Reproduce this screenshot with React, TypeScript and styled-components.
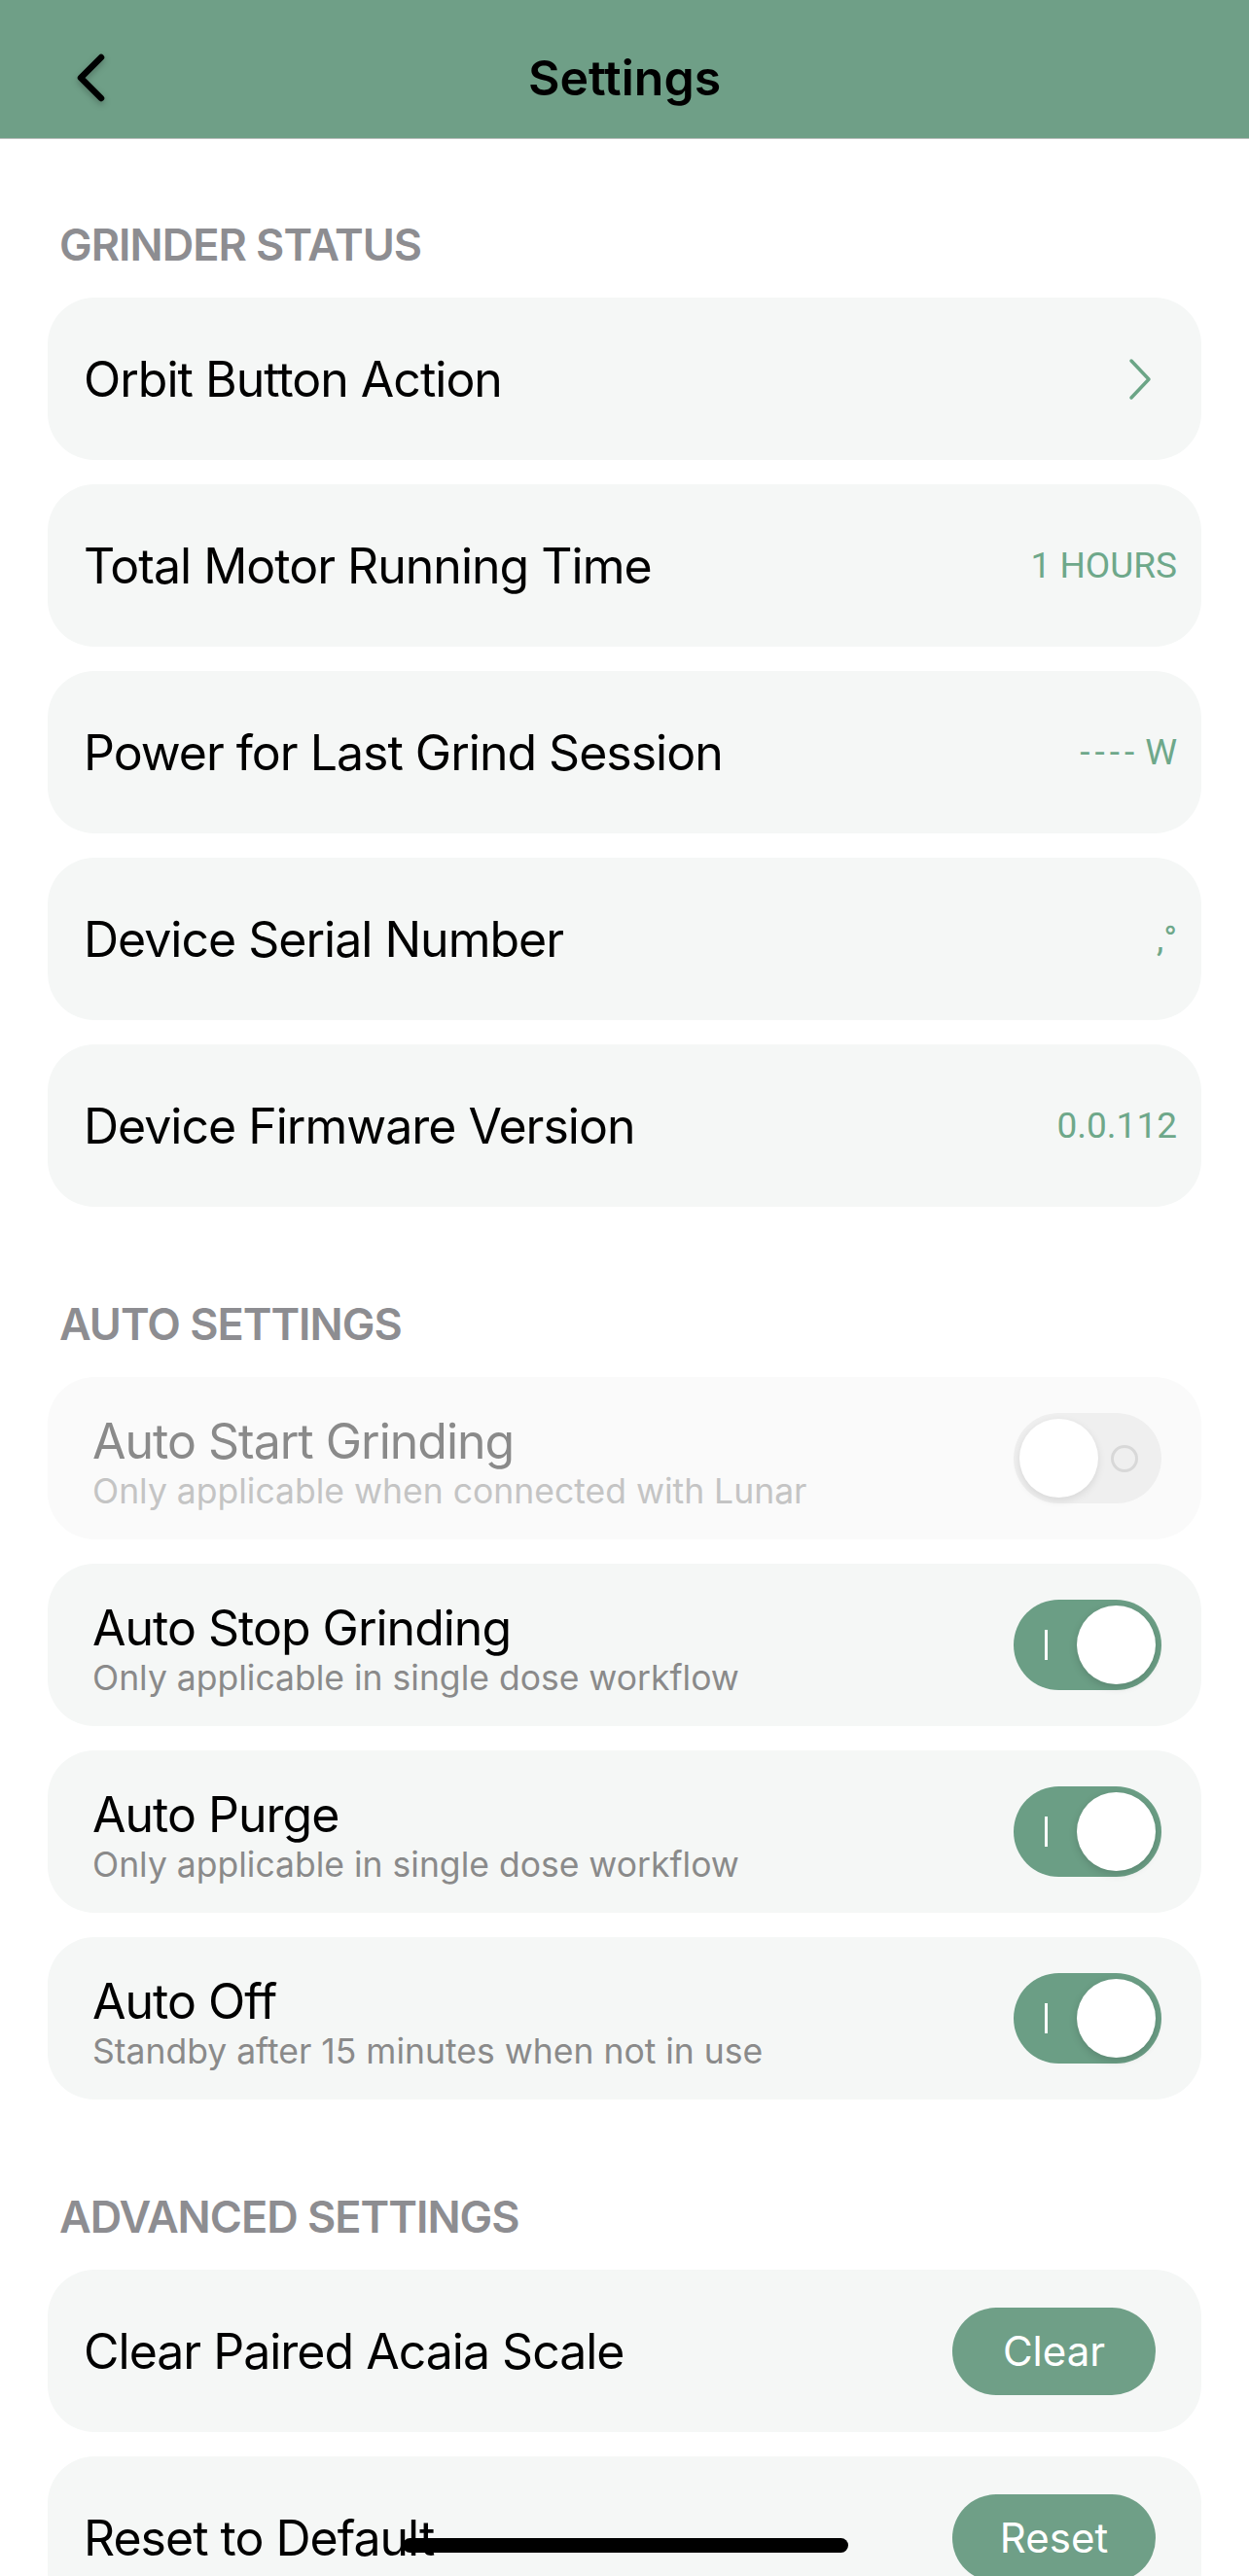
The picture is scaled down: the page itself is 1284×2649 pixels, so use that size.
import styled, { createGlobalStyle } from 'styled-components'

const GREEN = '#6f9f87'

const GlobalStyle = createGlobalStyle`
  html, body {
    margin: 0;
    padding: 0;
    background: #ffffff;
    overflow: hidden;
  }
  body {
    font-family: Inter, "Noto Sans", "Liberation Sans", sans-serif;
    color: #000;
  }
`

type StatusItem = { label: string; value?: string; link?: boolean; dashed?: boolean }
type AutoItem = { label: string; hint: string; on: boolean; disabled?: boolean }

const statusItems: StatusItem[] = [
  { label: 'Orbit Button Action', link: true },
  { label: 'Total Motor Running Time', value: '1 HOURS' },
  { label: 'Power for Last Grind Session', value: 'W', dashed: true },
  { label: 'Device Serial Number', value: ',°' },
  { label: 'Device Firmware Version', value: '0.0.112' },
]

const autoItems: AutoItem[] = [
  { label: 'Auto Start Grinding', hint: 'Only applicable when connected with Lunar', on: false, disabled: true },
  { label: 'Auto Stop Grinding', hint: 'Only applicable in single dose workflow', on: true },
  { label: 'Auto Purge', hint: 'Only applicable in single dose workflow', on: true },
  { label: 'Auto Off', hint: 'Standby after 15 minutes when not in use', on: true },
]

const advancedItems = [
  { label: 'Clear Paired Acaia Scale', action: 'Clear' },
  { label: 'Reset to Default', action: 'Reset' },
]

const BackIcon = () => (
  <BackSvg width="30" height="50" viewBox="0 0 30 50">
    <path d="M26 4 L5 25 L26 46" fill="none" stroke="#000" strokeWidth="6.5" strokeLinecap="round" strokeLinejoin="round" />
  </BackSvg>
)

const ChevronRight = () => (
  <svg width="26" height="44" viewBox="0 0 26 44">
    <path d="M4 3 L22 22 L4 41" fill="none" stroke="#6ba586" strokeWidth="3.5" strokeLinecap="round" strokeLinejoin="round" />
  </svg>
)

const Toggle = ({ on }: { on: boolean }) => (
  <Track $on={on}>
    {on ? <OnMark /> : <OffMark />}
    <Knob $on={on} />
  </Track>
)

export default function App() {
  return (
    <Page>
      <GlobalStyle />
      <Header>
        <BackButton>
          <BackIcon />
        </BackButton>
        <Title>Settings</Title>
        <span />
      </Header>

      <Content>
        <SectionTitle $first>GRINDER STATUS</SectionTitle>
        <CardList>
          {statusItems.map((item) => (
            <Card key={item.label} $pl={37} $pr={item.link ? 50 : 25}>
              <Label>{item.label}</Label>
              {item.link ? (
                <ChevronRight />
              ) : (
                <Value>
                  {item.dashed && <Dashes>----</Dashes>}
                  {item.value}
                </Value>
              )}
            </Card>
          ))}
        </CardList>

        <SectionTitle>AUTO SETTINGS</SectionTitle>
        <CardList>
          {autoItems.map((item) => (
            <Card key={item.label} $pl={46} $pr={41} $disabled={item.disabled}>
              <TextBlock>
                <Label $disabled={item.disabled}>{item.label}</Label>
                <Hint $disabled={item.disabled}>{item.hint}</Hint>
              </TextBlock>
              <Toggle on={item.on} />
            </Card>
          ))}
        </CardList>

        <SectionTitle>ADVANCED SETTINGS</SectionTitle>
        <CardList>
          {advancedItems.map((item) => (
            <Card key={item.label} $pl={37} $pr={47}>
              <Label>{item.label}</Label>
              <PillButton>{item.action}</PillButton>
            </Card>
          ))}
        </CardList>
      </Content>

      <HomeIndicator />
    </Page>
  )
}

const Page = styled.div`
  width: 1284px;
  min-height: 2649px;
`

const Header = styled.header`
  height: 143px;
  box-sizing: border-box;
  padding-top: 17px;
  background: ${GREEN};
  border-bottom: 1px solid #b9bdbb;
  display: grid;
  grid-template-columns: 1fr auto 1fr;
  align-items: center;
`

const BackButton = styled.div`
  padding-left: 78px;
  display: flex;
  align-items: center;
`

const BackSvg = styled.svg`
  filter: drop-shadow(0 3px 3px rgba(0, 0, 0, 0.25));
`

const Title = styled.h1`
  margin: 0;
  font-size: 50px;
  font-weight: 600;
  line-height: 60px;
  color: #000;
`

const Content = styled.main`
  padding: 0 49px;
`

const SectionTitle = styled.h2<{ $first?: boolean }>`
  margin: ${(p) => (p.$first ? '82px' : '94px')} 0 27px 12px;
  font-size: 45px;
  line-height: 54px;
  font-weight: 600;
  letter-spacing: -1px;
  color: #8d8d91;
`

const CardList = styled.div`
  display: flex;
  flex-direction: column;
  gap: 25px;
`

const Card = styled.div<{ $pl: number; $pr: number; $disabled?: boolean }>`
  height: 167px;
  box-sizing: border-box;
  padding: 0 ${(p) => p.$pr}px 0 ${(p) => p.$pl}px;
  border-radius: 48px;
  background: ${(p) => (p.$disabled ? '#fafafa' : '#f5f7f6')};
  display: flex;
  align-items: center;
  justify-content: space-between;
`

const TextBlock = styled.div`
  display: flex;
  flex-direction: column;
  padding-top: 12px;
`

const Label = styled.div<{ $disabled?: boolean }>`
  font-size: 50px;
  line-height: 50px;
  letter-spacing: -1px;
  color: ${(p) => (p.$disabled ? '#8a8a8a' : '#000')};
  white-space: nowrap;
`

const Hint = styled.div<{ $disabled?: boolean }>`
  margin-top: 6px;
  font-size: 35.5px;
  line-height: 42px;
  color: ${(p) => (p.$disabled ? '#c4c4c4' : '#8a8a8a')};
  white-space: nowrap;
`

const Value = styled.div`
  font-family: Roboto, "Liberation Sans", sans-serif;
  font-size: 37px;
  line-height: 44px;
  color: #6ea88a;
  white-space: nowrap;
`

const Dashes = styled.span`
  letter-spacing: 5px;
  margin-right: 6px;
`

const Track = styled.div<{ $on: boolean }>`
  position: relative;
  width: 152px;
  height: 93px;
  border-radius: 47px;
  background: ${(p) => (p.$on ? '#6b9e85' : '#efefef')};
  flex-shrink: 0;
`

const Knob = styled.div<{ $on: boolean }>`
  position: absolute;
  top: 6px;
  left: ${(p) => (p.$on ? '65px' : '6px')};
  width: 81px;
  height: 81px;
  border-radius: 50%;
  background: #fff;
  box-shadow: 0 3px 8px rgba(0, 0, 0, ${(p) => (p.$on ? 0.15 : 0.1)});
`

const OnMark = styled.div`
  position: absolute;
  left: 32px;
  top: 31px;
  width: 3px;
  height: 31px;
  background: #fff;
`

const OffMark = styled.div`
  position: absolute;
  left: 100px;
  top: 33px;
  width: 22px;
  height: 22px;
  border-radius: 50%;
  border: 3px solid #d8d8d8;
`

const PillButton = styled.button`
  width: 209px;
  height: 90px;
  border: none;
  border-radius: 45px;
  background: ${GREEN};
  color: #fff;
  font-family: Inter, "Liberation Sans", sans-serif;
  font-size: 42px;
  padding: 0;
`

const HomeIndicator = styled.div`
  position: fixed;
  left: 414px;
  bottom: 24px;
  width: 458px;
  height: 15px;
  border-radius: 8px;
  background: #000;
`
